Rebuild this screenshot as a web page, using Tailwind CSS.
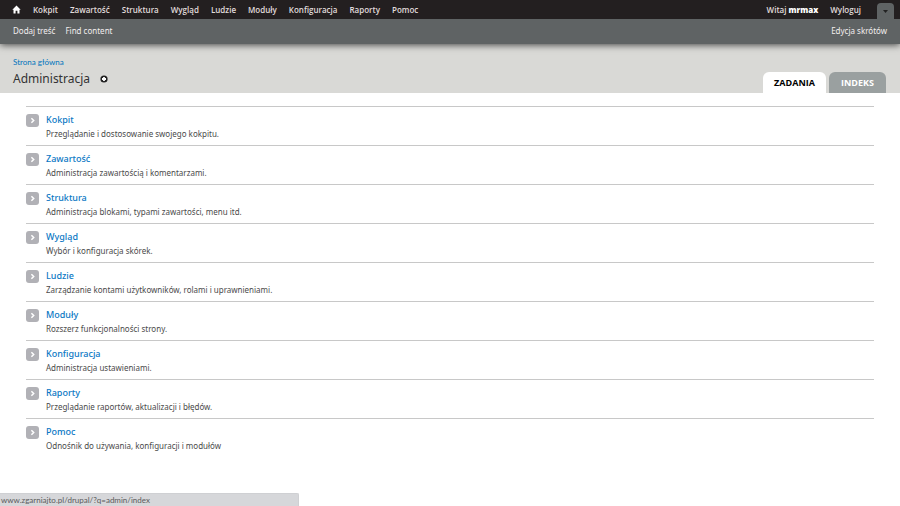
<!DOCTYPE html>
<html lang="pl">
<head>
  <meta charset="UTF-8">
  <meta name="viewport" content="width=device-width, initial-scale=1.0">
  <title>Administracja</title>
  <script src="https://cdn.jsdelivr.net/npm/@tailwindcss/browser@4"></script>
</head>
<body class="min-h-screen flex flex-col bg-white text-[8px] leading-[12px] text-[#4a4a4a] font-['Noto_Sans','Open_Sans',sans-serif]">
  <!-- Toolbar -->
  <div class="relative z-10 shadow-[0_1px_7px_#444]">
    <nav class="h-[19px] pl-3 pr-[6px] flex items-center bg-[#231f20] text-[#e0dcdc] font-semibold font-['Open_Sans','Noto_Sans',sans-serif]">
      <a href="#" aria-label="Strona główna" class="w-[9px] mr-3">
        <svg class="w-[9px] h-[9px]" viewBox="0 0 9 9" fill="#fff"><path d="M4.5 .5 .3 4.8h1.2V8.5h2.1V5.8h1.8v2.7h2.1V4.8h1.2z"/></svg>
      </a>
      <div class="flex gap-3">
        <a href="#">Kokpit</a>
        <a href="#">Zawartość</a>
        <a href="#">Struktura</a>
        <a href="#">Wygląd</a>
        <a href="#">Ludzie</a>
        <a href="#">Moduły</a>
        <a href="#">Konfiguracja</a>
        <a href="#">Raporty</a>
        <a href="#">Pomoc</a>
      </div>
      <div class="ml-auto flex items-center gap-3">
        <a href="#">Witaj <b class="font-extrabold text-white">mrmax</b></a>
        <a href="#">Wyloguj</a>
      </div>
      <button aria-label="Ukryj skróty" class="self-end ml-4 w-[17px] h-4 rounded-t-[4px] bg-[#5f6364] flex items-center justify-center">
        <svg class="w-[5px] h-[3px]" viewBox="0 0 5 3" fill="#222"><path d="M0 0h5L2.5 3z"/></svg>
      </button>
    </nav>
    <div class="h-[25px] px-[13px] pb-px flex items-center gap-[10px] bg-[#5f6364] text-[#f2eeee]">
      <a href="#">Dodaj treść</a>
      <a href="#">Find content</a>
      <a href="#" class="ml-auto">Edycja skrótów</a>
    </div>
  </div>

  <!-- Page header -->
  <header class="h-[49px] pl-[13px] pr-[14px] flex justify-between bg-[#d9d9d6]">
    <div class="pt-3">
      <a href="#" class="block text-[#0074bd] font-['Lato','Noto_Sans',sans-serif]">Strona główna</a>
      <div class="flex items-center gap-[10px]">
        <h1 class="text-[12px] leading-[22px] text-[#333]">Administracja</h1>
        <button aria-label="Dodaj do skrótów">
          <svg class="w-2 h-2" viewBox="0 0 8 8"><circle cx="4" cy="4" r="3.6" fill="#222"/><path d="M4 2v4M2 4h4" stroke="#fff" stroke-width="1.8"/></svg>
        </button>
      </div>
    </div>
    <div class="self-end flex gap-[3px] font-bold text-[9px] font-['Open_Sans','Noto_Sans',sans-serif]">
      <a href="#" class="w-[63px] h-[21px] flex items-center justify-center rounded-t-[6px] bg-white text-black">ZADANIA</a>
      <a href="#" class="w-[57px] h-[21px] flex items-center justify-center rounded-t-[6px] bg-[#9aa0a0] text-white">INDEKS</a>
    </div>
  </header>

  <!-- Admin sections -->
  <main class="px-[26px] pt-[13px]">
    <ul id="sections"></ul>
  </main>

  <!-- Link address -->
  <div class="mt-auto w-[299px] max-w-full h-[13px] pl-px rounded-tr-[2px] border-t border-r border-[#cfd0d3] bg-[#d6d7da] text-[#5a5a5a] font-['Lato','Noto_Sans',sans-serif]">www.zgarniajto.pl/drupal/?q=admin/index</div>

  <script>
    const sections = [
      ["Kokpit", "Przeglądanie i dostosowanie swojego kokpitu."],
      ["Zawartość", "Administracja zawartością i komentarzami."],
      ["Struktura", "Administracja blokami, typami zawartości, menu itd."],
      ["Wygląd", "Wybór i konfiguracja skórek."],
      ["Ludzie", "Zarządzanie kontami użytkowników, rolami i uprawnieniami."],
      ["Moduły", "Rozszerz funkcjonalności strony."],
      ["Konfiguracja", "Administracja ustawieniami."],
      ["Raporty", "Przeglądanie raportów, aktualizacji i błędów."],
      ["Pomoc", "Odnośnik do używania, konfiguracji i modułów"]
    ];
    document.getElementById("sections").innerHTML = sections.map(([name, text]) => `
      <li class="h-[39px] pt-[7px] flex gap-[7px] border-t border-[#c8c8c8]">
        <svg class="w-[13px] h-[13px] shrink-0" viewBox="0 0 13 13"><rect width="13" height="13" rx="3" fill="#b1b1b6"/><path d="M5.4 4.2 7.7 6.5 5.4 8.8" fill="none" stroke="#fff" stroke-width="1.5"/></svg>
        <div>
          <a href="#" class="block text-[9px] font-medium text-[#0b78c4]">${name}</a>
          <p class="pt-[2px]">${text}</p>
        </div>
      </li>`).join("");
  </script>
</body>
</html>
